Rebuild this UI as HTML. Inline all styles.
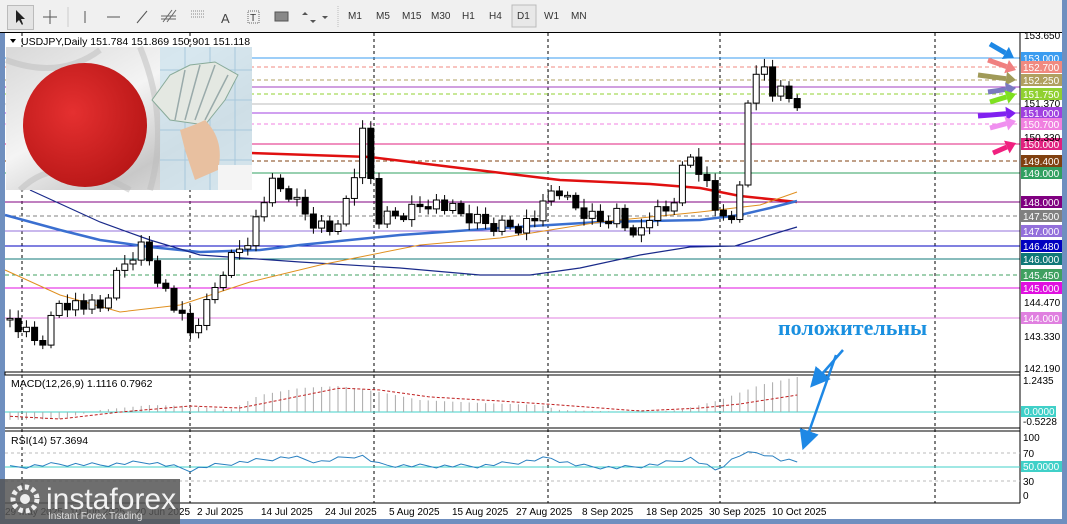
<!DOCTYPE html><html><head><meta charset="utf-8"><style>
body{margin:0;width:1067px;height:524px;overflow:hidden;background:#6f8fbf;font-family:"Liberation Sans",sans-serif}
#tb{position:absolute;left:0;top:0;width:1067px;height:32px;background:#f0f0f0}
.t{position:absolute;top:11px;font-size:10px;color:#333}
#main{position:absolute;left:5px;top:33px;width:1057px;height:486px;background:#fff}
</style></head><body>
<div id="tb">
<div style="position:absolute;left:7px;top:5px;width:25px;height:23px;border:1px solid #bbb;background:#e4e4e4"></div>
<svg style="position:absolute;left:0;top:0" width="600" height="32">
<path d="M16 10 L16 23 L19 20 L22 25 L23 24 L21 19 L25 19 Z" fill="#222"/>
<path d="M50 10 V24 M43 17 H57" stroke="#555"/>
<line x1="68" y1="7" x2="68" y2="27" stroke="#ccc"/>
<line x1="85" y1="11" x2="85" y2="23" stroke="#555"/>
<line x1="107" y1="17" x2="120" y2="17" stroke="#555"/>
<line x1="137" y1="23" x2="147" y2="11" stroke="#555"/>
<path d="M163 22 L172 10 M167 22 L176 10 M161 16 H176 M161 19 H176" stroke="#666"/>
<path d="M191 11 H205 M191 14 H205 M191 17 H205" stroke="#888" stroke-dasharray="1 1"/>
<text x="221" y="23" font-size="13" fill="#444">A</text>
<rect x="248" y="11" width="11" height="12" fill="none" stroke="#666" stroke-dasharray="1 1"/><text x="250" y="21" font-size="10" fill="#333">T</text>
<rect x="275" y="12" width="13" height="9" fill="#888" stroke="#555"/>
<path d="M305 12 L308 15 L302 15Z M310 20 L313 23 L316 20Z M322 16 L328 16 L325 19Z" fill="#555"/>
<line x1="338" y1="6" x2="338" y2="27" stroke="#bbb" stroke-dasharray="1 1"/>
<rect x="512" y="5" width="24" height="22" fill="#e8e8e8" stroke="#bbb"/>
</svg>
<span class="t" style="left:348px">M1</span><span class="t" style="left:376px">M5</span><span class="t" style="left:402px">M15</span><span class="t" style="left:431px">M30</span><span class="t" style="left:462px">H1</span><span class="t" style="left:489px">H4</span><span class="t" style="left:517px">D1</span><span class="t" style="left:544px">W1</span><span class="t" style="left:571px">MN</span>
</div>
<div style="position:absolute;left:0;top:32px;width:1067px;height:1px;background:#000"></div>
<div id="main"></div>
<svg id="c" style="position:absolute;left:0;top:0" width="1067" height="524" font-family="Liberation Sans,sans-serif">
<defs>
<linearGradient id="fab" x1="0" y1="0" x2="1" y2="1"><stop offset="0" stop-color="#d8d8d8"/><stop offset=".4" stop-color="#f4f4f4"/><stop offset=".7" stop-color="#c8c8c8"/><stop offset="1" stop-color="#eee"/></linearGradient>
<radialGradient id="rd" cx=".4" cy=".4" r=".7"><stop offset="0" stop-color="#e53030"/><stop offset="1" stop-color="#b51515"/></radialGradient>
<marker id="ah" markerWidth="8" markerHeight="8" refX="5" refY="4" orient="auto"><path d="M0 0 L8 4 L0 8Z" fill="#1e88e5"/></marker>
</defs>
<g id="grid" stroke="#000" stroke-dasharray="3 3"></g>
<g id="hl"></g>
<g id="ma" fill="none">
<path d="M250 153 L370 157 L460 168 L560 180 L650 184 L700 188 L740 196 L797 202" stroke="#e01010" stroke-width="2.5"/>
<path d="M5 215 L60 230 L100 240 L150 247 L200 252 L260 250 L300 245 L400 235 L500 228 L600 222 L700 220 L740 215 L770 208 L797 201" stroke="#3a6fd0" stroke-width="2.5"/>
<path d="M30 190 L100 222 L150 240 L200 255 L300 262 L400 268 L480 275 L530 275 L580 268 L640 255 L690 247 L735 246 L770 235 L797 227" stroke="#1a2a8a" stroke-width="1.2"/>
<path d="M5 270 L60 295 L120 312 L180 305 L250 282 L320 265 L420 245 L500 238 L600 222 L700 212 L760 205 L797 192" stroke="#e09020" stroke-width="1"/>
</g>
<g id="cd"></g>
<!-- image -->
<rect x="6" y="47" width="246" height="143" fill="url(#fab)"/>
<path d="M6 60 Q60 80 100 50 M20 190 Q60 150 130 190 M140 47 Q170 120 150 190" stroke="#bbb" stroke-width="6" fill="none" opacity=".5"/>
<circle cx="85" cy="125" r="62" fill="url(#rd)"/>
<rect x="160" y="47" width="92" height="143" fill="#cfe3ee" opacity=".8"/>
<path d="M160 70 H252 M160 100 H252 M160 130 H252 M160 160 H252 M185 47 V190 M210 47 V190 M235 47 V190" stroke="#a8c8dc"/>
<path d="M152 100 L170 75 L190 65 L215 62 L238 75 L225 100 L205 125 L170 120Z" fill="#e4e8e2" stroke="#8a9"/>
<path d="M175 120 L185 70 M185 120 L200 65 M195 120 L215 65 M205 120 L228 75" stroke="#9aa" stroke-width="1.5"/>
<path d="M180 130 Q195 125 205 120 Q225 140 218 170 L195 180 L185 150Z" fill="#e8c0a0"/>
<rect x="218" y="165" width="34" height="25" fill="#f4f4f4"/>
<!-- legend -->
<path d="M10 39 L16 39 L13 43Z" fill="#000"/>
<text x="21" y="45" font-size="10.5" fill="#000">USDJPY,Daily  151.784 151.869 150.901 151.118</text>
<!-- panels -->
<rect x="5" y="372" width="1015" height="3" fill="#fff" stroke="#000"/>
<line x1="5" y1="428" x2="1020" y2="428" stroke="#000"/><line x1="5" y1="431" x2="1020" y2="431" stroke="#000"/>
<line x1="5" y1="503" x2="1020" y2="503" stroke="#000"/>
<line x1="1020" y1="33" x2="1020" y2="503" stroke="#000"/>
<text x="11" y="387" font-size="10.5">MACD(12,26,9) 1.1116 0.7962</text>
<text x="11" y="444" font-size="10.5">RSI(14) 57.3694</text>
<line x1="5" y1="412" x2="1020" y2="412" stroke="#40d0c8"/>
<g id="mh" stroke="#aaa"></g>
<path id="ms" fill="none" stroke="#c02020" stroke-dasharray="3 2"/>
<line x1="5" y1="453" x2="1020" y2="453" stroke="#bbb" stroke-dasharray="3 3"/>
<line x1="5" y1="481" x2="1020" y2="481" stroke="#bbb" stroke-dasharray="3 3"/>
<line x1="5" y1="467" x2="1020" y2="467" stroke="#40d0c8"/>
<path id="rsi" fill="none" stroke="#2a80c0"/>
<g id="ax" font-size="10" fill="#000"></g>
<g id="tx" font-size="10" fill="#000"></g>
<!-- annotation -->
<text x="778" y="335" font-size="22" font-weight="bold" font-family="Liberation Serif,serif" fill="#1a90e0">положительны</text>
<path d="M843 350 L815 382" stroke="#1e88e5" stroke-width="2.5" marker-end="url(#ah)"/>
<path d="M836 355 L805 443" stroke="#1e88e5" stroke-width="2.5" marker-end="url(#ah)"/>
<g id="arr" stroke-width="5"></g>
<!-- logo -->
<rect x="0" y="479" width="180" height="45" fill="#555" opacity=".85"/>
<circle cx="25" cy="499" r="12" fill="none" stroke="#eee" stroke-width="5" stroke-dasharray="4 3"/>
<circle cx="25" cy="499" r="5" fill="#eee"/>
<text x="46" y="509" font-size="30" fill="#f2f2f2">instaforex</text>
<text x="48" y="519" font-size="10" fill="#ddd">Instant Forex Trading</text>
<rect x="1062" y="0" width="5" height="524" fill="#6f8fbf"/>
</svg>
<script>
(function(){
var NS="http://www.w3.org/2000/svg";
function el(p,t,a,txt){var e=document.createElementNS(NS,t);for(var k in a)e.setAttribute(k,a[k]);if(txt)e.textContent=txt;document.getElementById(p).appendChild(e);return e;}
[22,190,374,548,720,935].forEach(function(x){el("grid","line",{x1:x,y1:33,x2:x,y2:503});});
var H=[[58,"#3b9cf0","153.000",0],[67,"#f08a80","152.700",1],[80,"#b0a060","152.250",1],[87,"#a040c0","",0],[94,"#90d030","151.750",1],[104,"#bbb","",0],[113,"#a040e0","151.000",0],[124,"#f080e0","150.700",1],[144,"#e0207f","150.000",0],[161,"#804010","149.400",1],[173,"#30a060","149.000",0],[202,"#800080","148.000",0],[216,"#808080","147.500",1],[231,"#9370db","147.000",0],[246,"#0000c0","146.480",0],[259,"#107878","146.000",0],[275,"#40a060","145.450",1],[288,"#e010e0","145.000",0],[318,"#e080e0","144.000",0]];
H.forEach(function(h){var a={x1:5,y1:h[0],x2:1020,y2:h[0],stroke:h[1]};if(h[3])a["stroke-dasharray"]="4 3";el("hl","line",a);
if(h[2]){el("ax","rect",{x:1021,y:h[0]-6,width:41,height:12,fill:h[1]});el("ax","text",{x:1023,y:h[0]+4,fill:"#fff"},h[2]);}});
[[39,"153.650"],[107,"151.370"],[141,"150.330"],[306,"144.470"],[340,"143.330"],[372,"142.190"]].forEach(function(t){el("ax","text",{x:1024,y:t[0]},t[1]);});
[[384,"1.2435"],[425,"-0.5228"],[441,"100"],[457,"70"],[485,"30"],[499,"0"]].forEach(function(t){el("ax","text",{x:1023,y:t[0]},t[1]);});
el("ax","rect",{x:1021,y:406,width:35,height:11,fill:"#40d0c8"});el("ax","text",{x:1024,y:415,fill:"#fff"},"0.0000");
el("ax","rect",{x:1021,y:461,width:41,height:11,fill:"#40d0c8"});el("ax","text",{x:1023,y:470,fill:"#fff"},"50.0000");
[[5,"29 May 2025"],[70,"10 Jun 2025"],[135,"20 Jun 2025"],[197,"2 Jul 2025"],[261,"14 Jul 2025"],[325,"24 Jul 2025"],[389,"5 Aug 2025"],[452,"15 Aug 2025"],[516,"27 Aug 2025"],[582,"8 Sep 2025"],[646,"18 Sep 2025"],[709,"30 Sep 2025"],[772,"10 Oct 2025"]].forEach(function(t){el("tx","text",{x:t[0],y:515},t[1]);});
var K=[[10,320],[40,345],[60,300],[100,310],[120,270],[140,245],[150,260],[170,300],[190,335],[205,310],[225,265],[250,235],[270,185],[290,195],[310,220],[330,230],[350,195],[365,125],[375,220],[400,215],[430,200],[460,215],[490,225],[520,225],[540,215],[555,185],[570,205],[600,220],[620,210],[632,245],[650,215],[670,210],[688,152],[700,168],[712,195],[720,225],[735,220],[742,162],[750,92],[757,72],[766,58],[774,110],[782,80],[790,92],[798,113]];
function lin(A,x){if(x<=A[0][0])return A[0][1];for(var i=1;i<A.length;i++){if(x<=A[i][0]){var a=A[i-1],b=A[i];return a[1]+(b[1]-a[1])*(x-a[0])/(b[0]-a[0]);}}return A[A.length-1][1];}
var prev=lin(K,10),n=0,X=[];
for(var x=10;x<=799;x+=8.2){n++;var c=lin(K,x)+((n*37)%11-5)*1.6;var o=prev;var w=3+(n*13)%7;var t0=Math.min(o,c),b0=Math.max(o,c);if(b0-t0<1.5)b0=t0+1.5;
el("cd","line",{x1:x,y1:t0-w,x2:x,y2:b0+w*0.8,stroke:"#000"});
el("cd","rect",{x:x-3,y:t0,width:6,height:b0-t0,fill:c<o?"#fff":"#000",stroke:"#000"});prev=c;X.push(x);}
var M=[[5,420],[60,419],[100,410],[150,405],[190,406],[230,410],[260,395],[300,388],[340,386],[380,392],[420,400],[480,403],[540,405],[560,410],[640,412],[680,410],[720,400],[760,385],[797,377]];
var S=[[5,416],[60,419],[120,412],[190,406],[240,408],[300,396],[340,388],[380,390],[430,397],[500,401],[560,405],[640,411],[700,408],[740,404],[797,395]];
var sp="";for(var i=0;i<X.length;i++){var x=X[i];el("mh","line",{x1:x,y1:412,x2:x,y2:lin(M,x)});sp+=(i?"L":"M")+x+" "+lin(S,x).toFixed(1);}
document.getElementById("ms").setAttribute("d",sp);
var R=[[5,468],[30,466],[60,464],[100,465],[150,462],[190,470],[210,466],[260,460],[290,457],[320,462],[360,455],[380,465],[420,466],[480,466],[520,462],[550,458],[580,466],[620,468],[660,464],[690,458],[715,470],[740,455],[760,452],[780,460],[797,462]];
var rp="";for(var i=0;i<X.length;i++){rp+=(i?"L":"M")+X[i]+" "+(lin(R,X[i])+((i*7)%5-2)).toFixed(1);}
document.getElementById("rsi").setAttribute("d",rp);
[[990,44,1014,58,"#1e88e5"],[988,60,1016,70,"#f08080"],[978,75,1016,80,"#a09a58"],[988,92,1016,88,"#7a7ac0"],[990,102,1016,94,"#7fe020"],[978,116,1016,113,"#8020f0"],[990,128,1016,121,"#f090f0"],[993,153,1016,143,"#f0207f"]].forEach(function(a){
var dx=a[2]-a[0],dy=a[3]-a[1],L=Math.hypot(dx,dy),ux=dx/L,uy=dy/L;var bx=a[2]-ux*10,by=a[3]-uy*10;
el("arr","line",{x1:a[0],y1:a[1],x2:bx,y2:by,stroke:a[4]});
el("arr","path",{d:"M"+a[2]+" "+a[3]+"L"+(bx-uy*7)+" "+(by+ux*7)+"L"+(bx+uy*7)+" "+(by-ux*7)+"Z",fill:a[4],stroke:"none"});});
})();
</script>
</body></html>
